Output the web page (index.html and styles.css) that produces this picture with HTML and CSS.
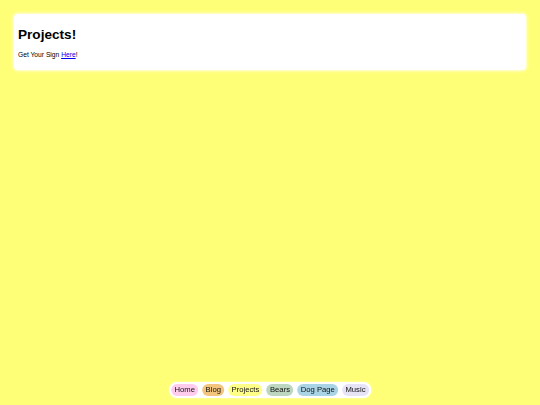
FILE: index.html
```html
<!DOCTYPE html>
<html>
<head>
<meta charset="utf-8">
<title>Projects!</title>
<link rel="stylesheet" href="styles.css">
</head>
<body>
<main class="card">
  <h1 class="title">Projects!</h1>
  <p class="text">Get Your Sign <a href="#" class="link">Here</a>!</p>
</main>
<nav class="nav">
  <a href="#" class="pill pill-home">Home</a>
  <a href="#" class="pill pill-blog">Blog</a>
  <a href="#" class="pill pill-projects">Projects</a>
  <a href="#" class="pill pill-bears">Bears</a>
  <a href="#" class="pill pill-dog">Dog Page</a>
  <a href="#" class="pill pill-music">Music</a>
</nav>
</body>
</html>
```
FILE: styles.css
```css
html, body {
  margin: 0;
  padding: 0;
}
body {
  background: #ffff77;
  font-family: "Liberation Sans", Arial, sans-serif;
  font-size: 6.7px;
  color: #000;
  height: 405px;
  box-sizing: border-box;
  padding: 14px 14px 0 14px;
}
.card {
  background: #fff;
  border-radius: 4px;
  box-shadow: 0 0 3px 1px rgba(255, 255, 255, 0.8);
  padding: 1px 4px 0 4px;
  height: 56px;
  box-sizing: border-box;
}
.title {
  font-size: 13.6px;
  font-weight: bold;
  margin: 12px 0 8px 0;
  line-height: 16px;
}
.text {
  margin: 0;
  line-height: 8px;
}
.link {
  color: #0000ee;
}
.nav {
  position: fixed;
  left: 50%;
  transform: translateX(-50%);
  bottom: 7px;
  display: flex;
  gap: 4px;
  background: #fff;
  border-radius: 9px;
  padding: 2px 2px;
  box-shadow: 0 0 2px rgba(255, 255, 255, 0.8);
}
.pill {
  display: block;
  color: #111;
  text-decoration: none;
  font-size: 7.7px;
  line-height: 12px;
  padding: 0 3.3px;
  border-radius: 6px;
}
.pill-home { background: #ffccee; }
.pill-blog { background: #f2c47e; }
.pill-projects { background: #ffff88; }
.pill-bears { background: #bcd6bf; }
.pill-dog { background: #a9d4e6; }
.pill-music { background: #e6e3f6; }
```
